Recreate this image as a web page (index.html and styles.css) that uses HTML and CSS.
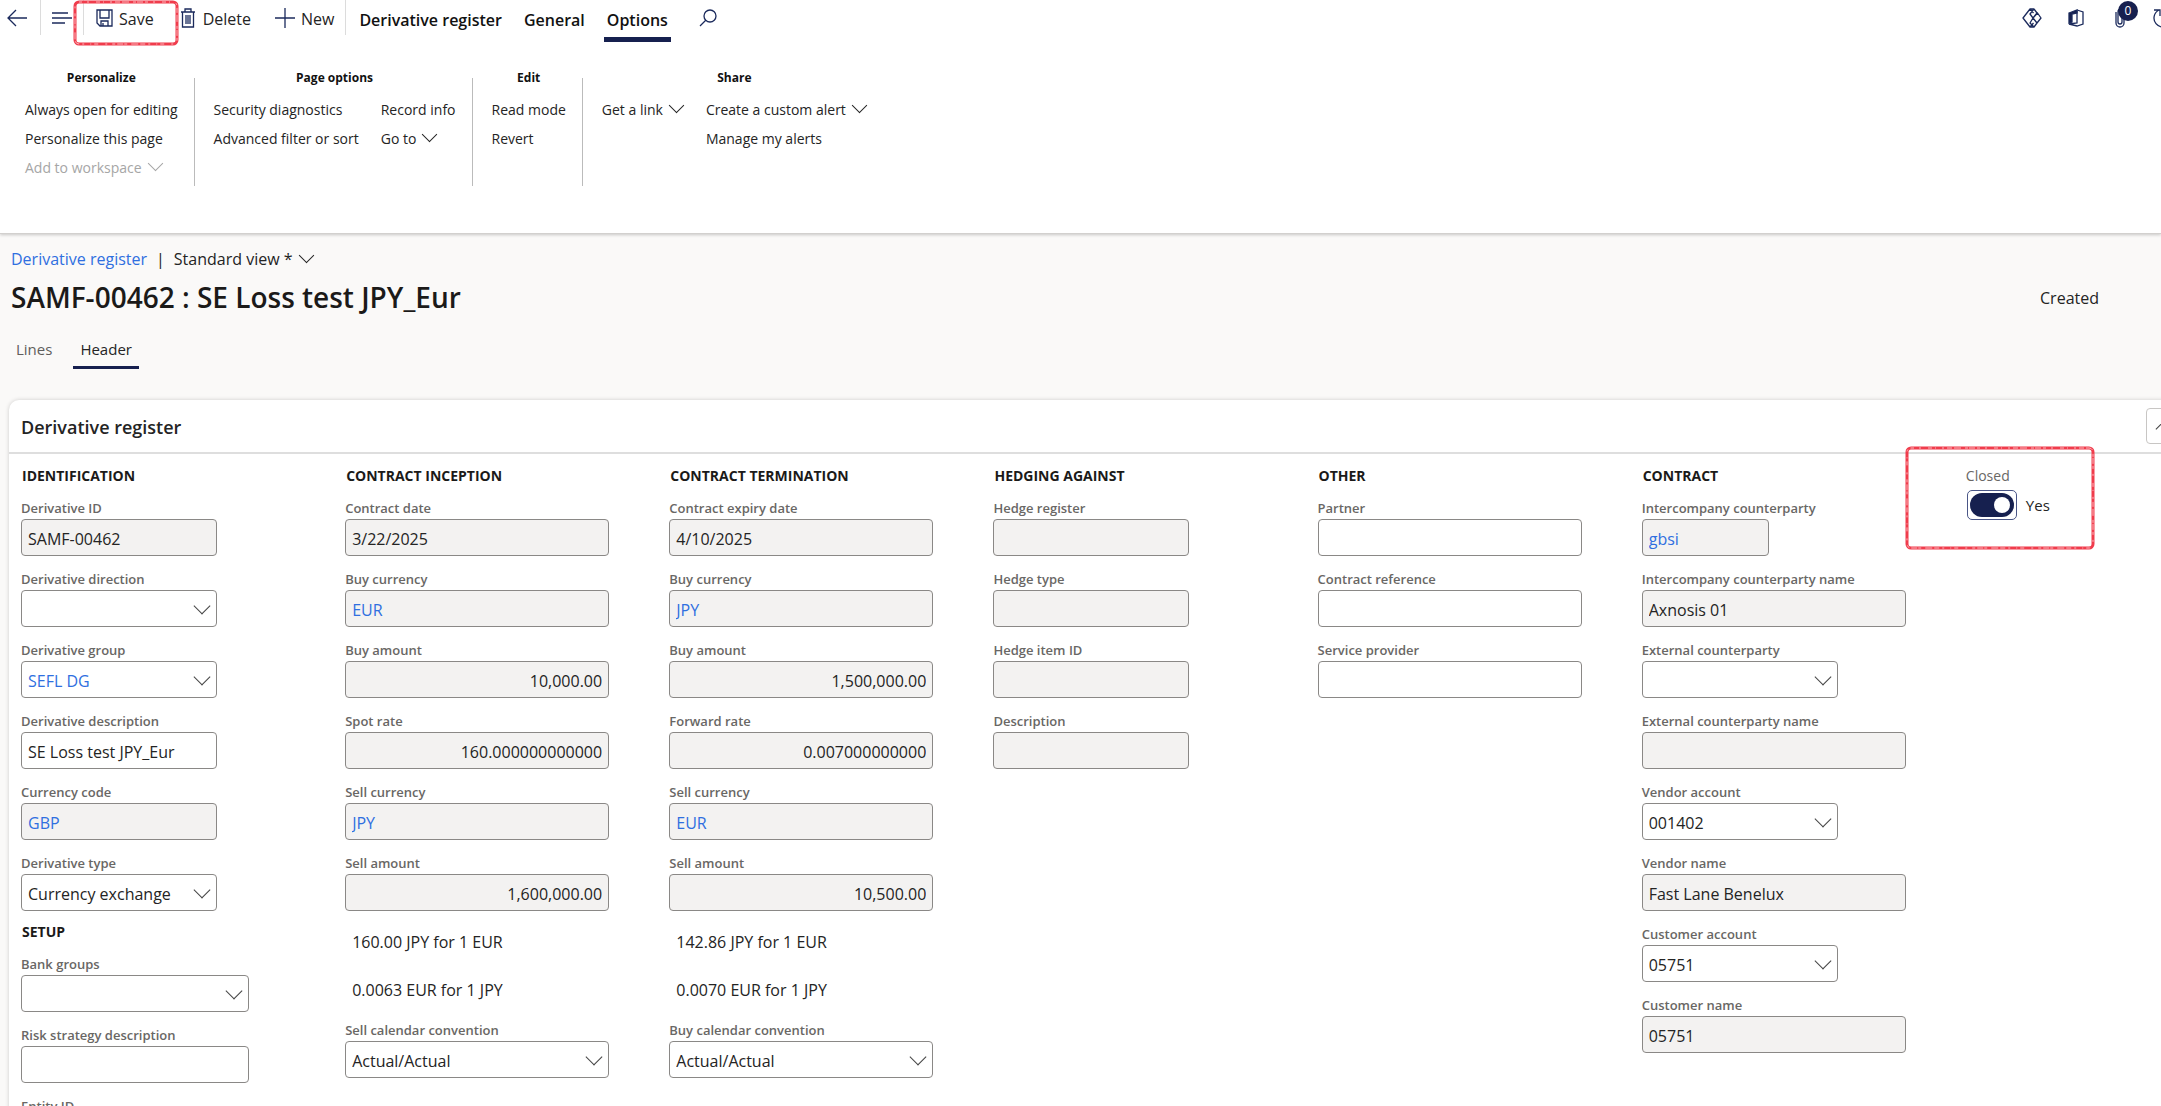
FILE: index.html
```html
<!DOCTYPE html>
<html lang="en">
<head>
    <meta charset="UTF-8">
    <title>Derivative register</title>
    <link rel="stylesheet" href="styles.css">
</head>
<body>

    <!-- action bar -->
    <header class="topbar">
        <div class="toolbar">
            <button class="tool back" aria-label="Back">
                <svg width="20" height="18" viewBox="0 0 20 18"><path d="M20 9H1M9 1L1 9l8 8"/></svg>
            </button>
            <span class="sep"></span>
            <button class="tool menu" aria-label="Show list">
                <svg width="20" height="14" viewBox="0 0 20 14"><path d="M0 2h16M0 7h20M0 12h13"/></svg>
            </button>
            <span class="sep"></span>
            <button class="tool save">
                <svg width="17" height="18" viewBox="0 0 17 18"><path d="M1 1h15v16H4l-3-3zM4 1v8h9V1M5 17v-5h7v5M7 14v3"/></svg>
                Save
                <svg class="mark" viewBox="0 0 106 46" preserveAspectRatio="none">
                    <rect class="mark-line" x="2" y="2" width="102" height="42" rx="4"/>
                    <rect class="mark-grain" x="2" y="2" width="102" height="42" rx="4"/>
                </svg>
            </button>
            <button class="tool delete">
                <svg width="14" height="20" viewBox="0 0 14 20"><path d="M0 4h14M4 4V1h6v3M1.500 4v15h11V4M5 7v9M7 7v9M9 7v9"/></svg>
                Delete
            </button>
            <button class="tool new">
                <svg width="20" height="20" viewBox="0 0 20 20"><path d="M10 0v20M0 10h20"/></svg>
                New
            </button>
            <span class="sep"></span>
            <nav class="menus">
                <button>Derivative register</button>
                <button>General</button>
                <button class="current">Options</button>
            </nav>
            <button class="tool search" aria-label="Search">
                <svg width="18" height="18" viewBox="0 0 18 18"><circle cx="11" cy="7" r="6"/><path d="M7 11l-6 6"/></svg>
            </button>
            <div class="right">
                <button class="tool" aria-label="Power Apps">
                    <svg width="20" height="20" viewBox="0 0 20 20" stroke-linejoin="round"><path d="M12 1H8L1 10l7 9h4M8 1l3.500 4M8 19l3.500-4M12 1l3 4-4 5-3-4zM15.500 5l3.500 5-4 5-4-5zM11 10l4 5-3 4-4-4z"/></svg>
                </button>
                <button class="tool" aria-label="Office">
                    <svg width="16" height="18" viewBox="0 0 16 18"><path class="solid" d="M1 4l8-3v3L4 5v8l-3 1z"/><path d="M9 1l6 2v12l-6 2-8-2 8-1V2"/></svg>
                </button>
                <button class="tool clip" aria-label="Attachments">
                    <svg width="10" height="20" viewBox="0 0 10 20"><path d="M1 4v11a4 4 0 0 0 8 0V4a3 3 0 0 0-6 0v10a2 2 0 0 0 4 0V6"/></svg>
                    <span class="badge">0</span>
                </button>
                <button class="tool" aria-label="Refresh">
                    <svg width="20" height="20" viewBox="0 0 20 20"><path d="M6 2a9 9 0 1 0 8 0M1 2h6v6"/></svg>
                </button>
            </div>
        </div>

        <div class="ribbon">
            <section class="group personalize">
                <h2>Personalize</h2>
                <div class="cols">
                    <div class="col">
                        <button>Always open for editing</button>
                        <button>Personalize this page</button>
                        <button class="drop" disabled>Add to workspace</button>
                    </div>
                </div>
            </section>
            <section class="group">
                <h2>Page options</h2>
                <div class="cols">
                    <div class="col">
                        <button>Security diagnostics</button>
                        <button>Advanced filter or sort</button>
                    </div>
                    <div class="col">
                        <button>Record info</button>
                        <button class="drop">Go to</button>
                    </div>
                </div>
            </section>
            <section class="group">
                <h2>Edit</h2>
                <div class="cols">
                    <div class="col">
                        <button>Read mode</button>
                        <button>Revert</button>
                    </div>
                </div>
            </section>
            <section class="group">
                <h2>Share</h2>
                <div class="cols">
                    <div class="col">
                        <button class="drop">Get a link</button>
                    </div>
                    <div class="col">
                        <button class="drop">Create a custom alert</button>
                        <button>Manage my alerts</button>
                    </div>
                </div>
            </section>
        </div>
    </header>

    <main class="page">
        <div class="crumbs">
            <a href="#">Derivative register</a>
            <span class="bar">|</span>
            <button class="drop">Standard view *</button>
        </div>
        <div class="title-row">
            <h1>SAMF-00462 : SE Loss test JPY_Eur</h1>
            <span class="status">Created</span>
        </div>
        <div class="tabs">
            <button>Lines</button>
            <button class="current">Header</button>
        </div>

        <section class="card">
            <div class="card-head">
                <h2>Derivative register</h2>
                <button class="collapse" aria-label="Collapse"></button>
            </div>
            <form class="form">

                <div class="column">
                    <h3>Identification</h3>
                    <div class="field">
                        <label for="derivative-id">Derivative ID</label>
                        <input id="derivative-id" value="SAMF-00462" readonly>
                    </div>
                    <div class="field">
                        <label for="direction">Derivative direction</label>
                        <div class="pick"><select id="direction"><option></option></select></div>
                    </div>
                    <div class="field">
                        <label for="group">Derivative group</label>
                        <div class="pick"><select id="group" class="link"><option>SEFL DG</option></select></div>
                    </div>
                    <div class="field">
                        <label for="description">Derivative description</label>
                        <input id="description" value="SE Loss test JPY_Eur">
                    </div>
                    <div class="field">
                        <label for="currency">Currency code</label>
                        <input id="currency" class="link" value="GBP" readonly>
                    </div>
                    <div class="field">
                        <label for="type">Derivative type</label>
                        <div class="pick"><select id="type"><option>Currency exchange</option></select></div>
                    </div>
                    <h3>Setup</h3>
                    <div class="field mid">
                        <label for="bank">Bank groups</label>
                        <div class="pick"><select id="bank"><option></option></select></div>
                    </div>
                    <div class="field mid">
                        <label for="risk">Risk strategy description</label>
                        <input id="risk">
                    </div>
                    <div class="field">
                        <label for="entity">Entity ID</label>
                        <input id="entity">
                    </div>
                </div>

                <div class="column">
                    <h3>Contract inception</h3>
                    <div class="field wide">
                        <label for="contract-date">Contract date</label>
                        <input id="contract-date" value="3/22/2025" readonly>
                    </div>
                    <div class="field wide">
                        <label for="buy-currency">Buy currency</label>
                        <input id="buy-currency" class="link" value="EUR" readonly>
                    </div>
                    <div class="field wide">
                        <label for="buy-amount">Buy amount</label>
                        <input id="buy-amount" class="num" value="10,000.00" readonly>
                    </div>
                    <div class="field wide">
                        <label for="spot">Spot rate</label>
                        <input id="spot" class="num" value="160.000000000000" readonly>
                    </div>
                    <div class="field wide">
                        <label for="sell-currency">Sell currency</label>
                        <input id="sell-currency" class="link" value="JPY" readonly>
                    </div>
                    <div class="field wide">
                        <label for="sell-amount">Sell amount</label>
                        <input id="sell-amount" class="num" value="1,600,000.00" readonly>
                    </div>
                    <p class="rate">160.00 JPY for 1 EUR</p>
                    <p class="rate">0.0063 EUR for 1 JPY</p>
                    <div class="field wide">
                        <label for="sell-calendar">Sell calendar convention</label>
                        <div class="pick"><select id="sell-calendar"><option>Actual/Actual</option></select></div>
                    </div>
                </div>

                <div class="column">
                    <h3>Contract termination</h3>
                    <div class="field wide">
                        <label for="expiry">Contract expiry date</label>
                        <input id="expiry" value="4/10/2025" readonly>
                    </div>
                    <div class="field wide">
                        <label for="t-buy-currency">Buy currency</label>
                        <input id="t-buy-currency" class="link" value="JPY" readonly>
                    </div>
                    <div class="field wide">
                        <label for="t-buy-amount">Buy amount</label>
                        <input id="t-buy-amount" class="num" value="1,500,000.00" readonly>
                    </div>
                    <div class="field wide">
                        <label for="forward">Forward rate</label>
                        <input id="forward" class="num" value="0.007000000000" readonly>
                    </div>
                    <div class="field wide">
                        <label for="t-sell-currency">Sell currency</label>
                        <input id="t-sell-currency" class="link" value="EUR" readonly>
                    </div>
                    <div class="field wide">
                        <label for="t-sell-amount">Sell amount</label>
                        <input id="t-sell-amount" class="num" value="10,500.00" readonly>
                    </div>
                    <p class="rate">142.86 JPY for 1 EUR</p>
                    <p class="rate">0.0070 EUR for 1 JPY</p>
                    <div class="field wide">
                        <label for="buy-calendar">Buy calendar convention</label>
                        <div class="pick"><select id="buy-calendar"><option>Actual/Actual</option></select></div>
                    </div>
                </div>

                <div class="column">
                    <h3>Hedging against</h3>
                    <div class="field">
                        <label for="hedge-register">Hedge register</label>
                        <input id="hedge-register" readonly>
                    </div>
                    <div class="field">
                        <label for="hedge-type">Hedge type</label>
                        <input id="hedge-type" readonly>
                    </div>
                    <div class="field">
                        <label for="hedge-item">Hedge item ID</label>
                        <input id="hedge-item" readonly>
                    </div>
                    <div class="field">
                        <label for="hedge-description">Description</label>
                        <input id="hedge-description" readonly>
                    </div>
                </div>

                <div class="column">
                    <h3>Other</h3>
                    <div class="field wide">
                        <label for="partner">Partner</label>
                        <input id="partner">
                    </div>
                    <div class="field wide">
                        <label for="reference">Contract reference</label>
                        <input id="reference">
                    </div>
                    <div class="field wide">
                        <label for="provider">Service provider</label>
                        <input id="provider">
                    </div>
                </div>

                <div class="column">
                    <h3>Contract</h3>
                    <div class="field narrow">
                        <label for="ic">Intercompany counterparty</label>
                        <input id="ic" class="link" value="gbsi" readonly>
                    </div>
                    <div class="field wide">
                        <label for="ic-name">Intercompany counterparty name</label>
                        <input id="ic-name" value="Axnosis 01" readonly>
                    </div>
                    <div class="field">
                        <label for="ext">External counterparty</label>
                        <div class="pick"><select id="ext"><option></option></select></div>
                    </div>
                    <div class="field wide">
                        <label for="ext-name">External counterparty name</label>
                        <input id="ext-name" readonly>
                    </div>
                    <div class="field">
                        <label for="vendor">Vendor account</label>
                        <div class="pick"><select id="vendor"><option>001402</option></select></div>
                    </div>
                    <div class="field wide">
                        <label for="vendor-name">Vendor name</label>
                        <input id="vendor-name" value="Fast Lane Benelux" readonly>
                    </div>
                    <div class="field">
                        <label for="customer">Customer account</label>
                        <div class="pick"><select id="customer"><option>05751</option></select></div>
                    </div>
                    <div class="field wide">
                        <label for="customer-name">Customer name</label>
                        <input id="customer-name" value="05751" readonly>
                    </div>
                </div>

                <div class="column closed">
                    <label for="closed">Closed</label>
                    <div class="toggle-row">
                        <input type="checkbox" id="closed" class="toggle" checked>
                        <span>Yes</span>
                    </div>
                    <svg class="mark" viewBox="0 0 190 104" preserveAspectRatio="none">
                        <rect class="mark-line" x="2" y="2" width="186" height="100" rx="4"/>
                        <rect class="mark-grain" x="2" y="2" width="186" height="100" rx="4"/>
                    </svg>
                </div>

            </form>
        </section>
    </main>

</body>
</html>
```
FILE: styles.css
```css
* {
    box-sizing: border-box;
    margin: 0;
    padding: 0;
}
body {
    height: 100vh;
    overflow: hidden;
    background-color: #faf9f8;
    color: #242424;
    font-family: "Open Sans", "Noto Sans", sans-serif;
    font-size: 16px;
    line-height: 20px;
}
button, input, select {
    font: inherit;
    color: inherit;
}
button {
    border: 0;
    background: none;
    white-space: nowrap;
    cursor: pointer;
}
svg {
    fill: none;
    stroke: #1b2a5c;
    stroke-width: 1.3;
    flex: none;
}
.solid {
    fill: #16204f;
}

/* action bar */
.topbar {
    height: 234px;
    background-color: #fff;
    border-bottom: 1px solid #d2d0ce;
    box-shadow: 0 1px 3px rgba(0, 0, 0, .2);
    position: relative;
}
.toolbar {
    display: flex;
    height: 42px;
}
.sep {
    width: 1px;
    height: 35px;
    background-color: #dcdcdc;
}
.tool {
    display: flex;
    align-items: center;
    gap: 6px;
    height: 38px;
    position: relative;
}
.tool svg {
    margin-bottom: 3px;
}
.back {
    margin: 0 13px 0 7px;
}
.menu {
    margin: 0 11px 0 11px;
}
.save {
    margin: 0 27px 0 12px;
}
.delete {
    gap: 8px;
    margin-right: 24px;
}
.new {
    margin-right: 11px;
}
.menus {
    display: flex;
    gap: 16px;
    margin-left: 10px;
}
.menus button {
    height: 42px;
    padding: 0 3px 3px;
    font-weight: 600;
    color: #111;
}
.menus .current {
    padding-bottom: 0;
    padding-top: 2px;
    border-bottom: 5px solid #16204f;
}
.search {
    margin-left: 28px;
}
.right {
    display: flex;
    gap: 26px;
    margin-left: auto;
    margin-right: -12px;
}
.clip {
    margin: 0 2px 0 5px;
}
.badge {
    position: absolute;
    left: 3px;
    top: 1px;
    width: 20px;
    height: 20px;
    border-radius: 50%;
    background-color: #16204f;
    color: #fff;
    font-size: 12px;
    text-align: center;
}

/* red hand-drawn highlight */
.mark {
    position: absolute;
    pointer-events: none;
    z-index: 1;
}
.mark-line {
    stroke: #f03c4c;
    stroke-width: 3;
}
.mark-grain {
    stroke: #fbb4ba;
    stroke-width: 1;
    stroke-dasharray: 3 5 2 7 4 3 1 6 2;
}
.save .mark {
    left: -23px;
    top: 0;
    width: 106px;
    height: 46px;
}
.closed .mark {
    left: -61px;
    top: -20px;
    width: 190px;
    height: 104px;
}

/* options ribbon */
.ribbon {
    display: flex;
    padding-top: 26px;
    font-size: 14px;
}
.group {
    height: 118px;
    padding: 0 16px 0 20px;
    position: relative;
}
.personalize {
    padding-left: 25px;
}
.group + .group::before {
    content: "";
    position: absolute;
    left: 0;
    top: 10px;
    width: 1px;
    height: 108px;
    background-color: #bbb;
}
.group h2 {
    font-size: 12px;
    font-weight: 700;
    line-height: 20px;
    text-align: center;
    color: #111;
}
.cols {
    display: flex;
    gap: 22px;
    padding-top: 7px;
}
.col {
    display: flex;
    flex-direction: column;
    align-items: flex-start;
}
.col button {
    height: 29px;
}
.col button:disabled {
    color: #a6a6a6;
}
.drop::after {
    content: "";
    display: inline-block;
    width: 10px;
    height: 10px;
    margin: 0 2px 4px 8px;
    border: solid currentColor;
    border-width: 0 1px 1px 0;
    transform: rotate(45deg);
}

/* page header */
.page {
    padding: 15px 11px 0;
}
.crumbs {
    display: flex;
    align-items: center;
    height: 20px;
}
.crumbs a {
    color: #2f6fe0;
    text-decoration: none;
}
.bar {
    margin: 0 9px;
}
.title-row {
    display: flex;
    justify-content: space-between;
    align-items: center;
    height: 55px;
    padding-right: 51px;
}
h1 {
    font-size: 28px;
    font-weight: 600;
    color: #1b1a19;
}
.status {
    padding-top: 3px;
}
.tabs {
    display: flex;
    gap: 14px;
    margin-left: -2px;
    padding-top: 7px;
    font-size: 15px;
}
.tabs button {
    height: 38px;
    padding: 0 7px 3px;
    color: #605e5c;
}
.tabs .current {
    color: #242424;
    padding-bottom: 0;
    border-bottom: 3px solid #16204f;
}

/* card */
.card {
    margin: 31px -40px 0 -2px;
    background-color: #fff;
    border-radius: 10px;
    box-shadow: 0 0 4px rgba(0, 0, 0, .18);
}
.card-head {
    display: flex;
    justify-content: space-between;
    align-items: center;
    height: 54px;
    padding: 0 8px 0 12px;
    border-bottom: 2px solid #dedede;
}
.card-head h2 {
    padding-top: 2px;
    font-size: 18px;
    font-weight: 600;
}
.collapse {
    width: 36px;
    height: 36px;
    border: 1px solid #c8c6c4;
    border-radius: 4px;
}
.collapse::after {
    content: "";
    display: inline-block;
    width: 11px;
    height: 11px;
    margin-top: 10px;
    border: solid #444;
    border-width: 1px 0 0 1px;
    transform: rotate(45deg);
}
.form {
    display: grid;
    grid-template-columns: repeat(7, 15vw);
    padding: 12px 0 0 12px;
    min-height: 700px;
}
.column h3 {
    height: 32px;
    padding-left: 1px;
    font-size: 14px;
    font-weight: 700;
    text-transform: uppercase;
    color: #1b1a19;
}
.field {
    width: 196px;
    margin-bottom: 13px;
}
.field + h3 {
    margin-top: -2px;
}
.narrow {
    width: 127px;
}
.mid {
    width: 228px;
}
.wide {
    width: 264px;
}
.column label {
    display: block;
    height: 21px;
    font-size: 13px;
    font-weight: 600;
    color: #696765;
    white-space: nowrap;
}
.field input, .field select {
    display: block;
    width: 100%;
    height: 37px;
    padding: 2px 6px 0;
    border: 1px solid #8a8886;
    border-radius: 4px;
    background-color: #fff;
    appearance: none;
}
.field input:read-only {
    background-color: #f3f2f1;
}
.field .link {
    color: #2f6fe0;
}
.field .num {
    text-align: right;
}
.pick {
    position: relative;
}
.pick::after {
    content: "";
    position: absolute;
    right: 9px;
    top: 10px;
    width: 11px;
    height: 11px;
    border: solid #444;
    border-width: 0 1px 1px 0;
    transform: rotate(45deg);
    pointer-events: none;
}
.rate {
    height: 48px;
    padding: 8px 0 0 7px;
}

/* closed switch */
.column.closed {
    position: relative;
}
.closed label {
    height: 24px;
    font-size: 14px;
    font-weight: 400;
}
.toggle-row {
    display: flex;
    align-items: center;
    gap: 9px;
    padding-left: 1px;
    font-size: 15px;
}
.toggle {
    appearance: none;
    width: 50px;
    height: 30px;
    padding: 2px;
    border: 1px solid #4a5687;
    border-radius: 5px;
    position: relative;
}
.toggle::before {
    content: "";
    display: block;
    height: 24px;
    border-radius: 12px;
    background-color: #16204f;
}
.toggle::after {
    content: "";
    position: absolute;
    right: 6px;
    top: 6px;
    width: 16px;
    height: 16px;
    border-radius: 50%;
    background-color: #fff;
}
```
